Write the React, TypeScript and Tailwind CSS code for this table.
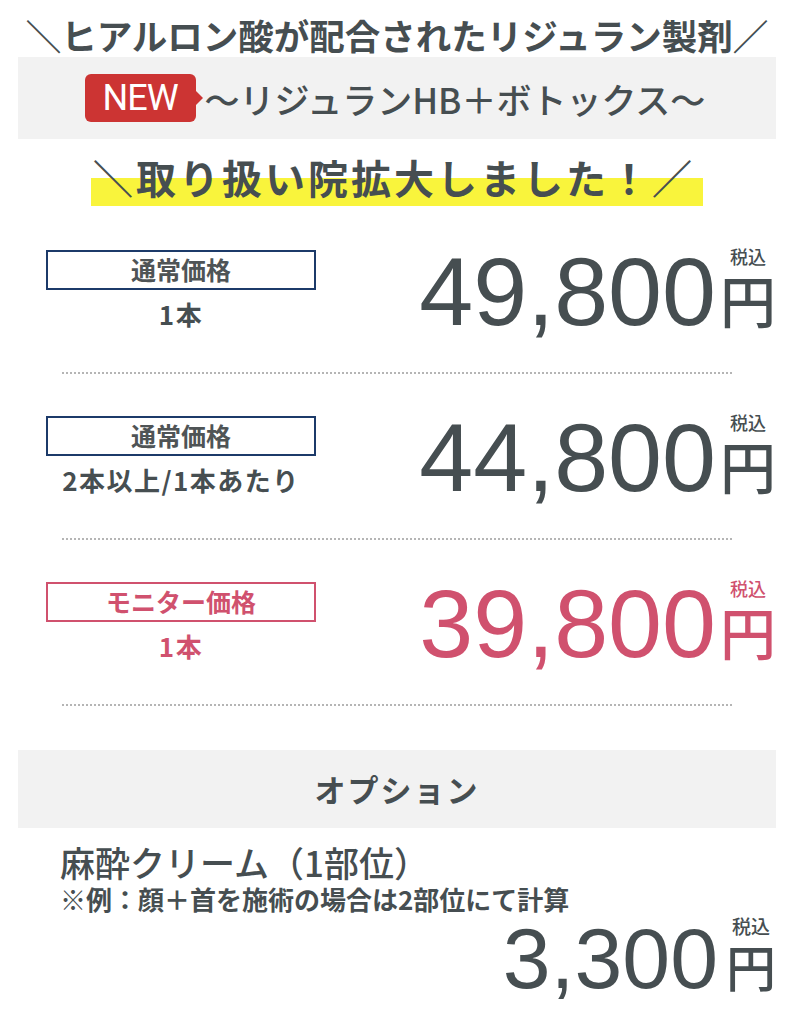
const jp = { fontFamily: '"Noto Sans CJK JP", "Noto Sans", sans-serif' };
const num = { fontFamily: '"Liberation Sans", Arial, sans-serif' };
const badge = { fontFamily: 'Roboto, "Liberation Sans", sans-serif' };

type Row = {
  label: string;
  sub: string;
  price: string;
  pink?: boolean;
};

const rows: Row[] = [
  { label: "通常価格", sub: "1本", price: "49,800" },
  { label: "通常価格", sub: "2本以上/1本あたり", price: "44,800" },
  { label: "モニター価格", sub: "1本", price: "39,800", pink: true },
];

function PriceRow({ row }: { row: Row }) {
  const color = row.pink ? "text-[#d0516e]" : "text-[#464e51]";
  return (
    <div>
      <div className="flex items-start justify-between pl-[28px]">
        {/* label */}
        <div className="flex w-[270px] flex-col items-center pt-[7px]">
          <div
            className={`flex h-[40px] w-full items-center justify-center border-2 text-[25px] font-bold ${
              row.pink ? "border-[#d0516e] text-[#d0516e]" : "border-[#1c3a69] text-[#4f5456]"
            }`}
          >
            {row.label}
          </div>
          <div className={`mt-[8px] text-[26px] font-bold leading-[32px] tracking-[1.5px] ${color}`}>{row.sub}</div>
        </div>

        {/* price */}
        <div className={`flex items-end ${color}`}>
          <span className="text-[97px] leading-none" style={num}>
            {row.price}
          </span>
          <div className="mb-[13px] ml-[4px] flex flex-col items-center">
            <span className="text-[18px] font-medium leading-[18px]">税込</span>
            <span className="mt-[6px] text-[56px] font-medium leading-[56px]">円</span>
          </div>
        </div>
      </div>
      <div className="mx-[44px] mt-[32px] border-t-2 border-dotted border-[#b5b5b5]" />
    </div>
  );
}

export default function App() {
  return (
    <div className="min-h-screen bg-white px-[18px] text-[#464e51]" style={jp}>
      {/* title */}
      <div className="pt-[12px] text-center text-[35.5px] font-bold leading-[45px]">
        ＼ヒアルロン酸が配合されたリジュラン製剤／
      </div>

      {/* new band */}
      <div className="flex h-[82px] items-center justify-center gap-[9px] bg-[#f2f2f2] pr-[4px]">
        <div
          className="relative flex h-[48px] w-[111px] items-center justify-center rounded-[6px] bg-[#cc3433] text-[36px] tracking-[-1px] text-white"
          style={badge}
        >
          NEW
          <span className="absolute right-[-7px] top-[17px] h-0 w-0 border-y-[7px] border-l-[7px] border-y-transparent border-l-[#cc3433]" />
        </div>
        <div className="text-[35px] font-medium leading-none">〜リジュランHB＋ボトックス〜</div>
      </div>

      {/* highlight */}
      <div className="mt-[13px] text-center">
        <span className="inline-block bg-[linear-gradient(transparent_48%,#f9f43c_48%)] pl-[2px] pr-[8px] pb-[4px] text-[40px] font-bold leading-[50px] tracking-[3px]">
          ＼取り扱い院拡大しました！／
        </span>
      </div>

      {/* prices */}
      <div className="mt-[37px] flex flex-col gap-[35px]">
        {rows.map((r, i) => (
          <PriceRow key={i} row={r} />
        ))}
      </div>

      {/* option */}
      <div className="mt-[44px] flex h-[78px] items-center justify-center bg-[#f2f2f2] text-[31px] font-bold tracking-[2px]">
        オプション
      </div>

      <div className="pl-[42px]">
        <div className="mt-[13px] text-[35px] font-medium leading-[42px]">麻酔クリーム（1部位）</div>
        <div className="text-[26px] font-bold leading-[32px]">※例：顔＋首を施術の場合は2部位にて計算</div>
        <div className="flex items-end justify-end">
          <span className="text-[86px] leading-none" style={num}>
            3,300
          </span>
          <div className="mb-[11px] ml-[8px] flex flex-col items-center">
            <span className="text-[19px] font-medium leading-[19px]">税込</span>
            <span className="mt-[5px] text-[50px] font-medium leading-[50px]">円</span>
          </div>
        </div>
      </div>
    </div>
  );
}
